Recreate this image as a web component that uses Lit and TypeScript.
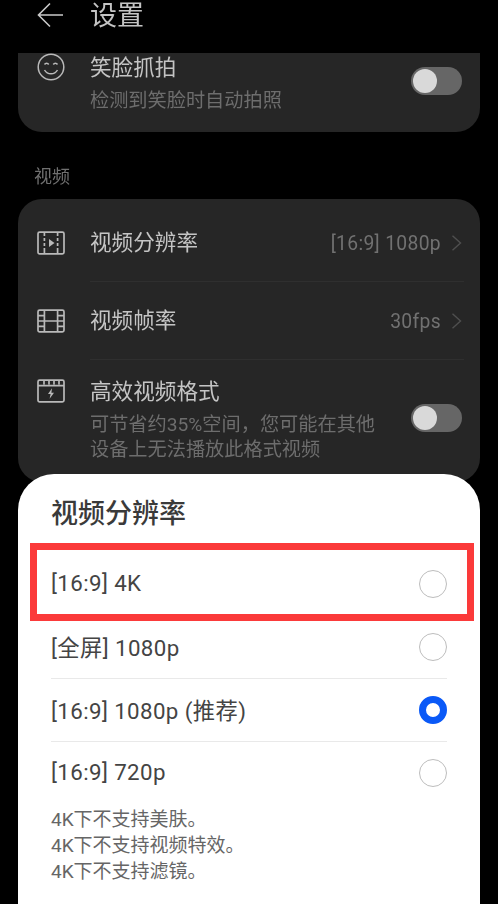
import { LitElement, html, css, svg } from "lit";
import { customElement } from "lit/decorators.js";

const icon = (body: unknown) => html`<svg class="icon" viewBox="0 0 28 28" fill="none" stroke="currentColor" stroke-width="1.7">${body}</svg>`;

const chevron = html`<svg class="chev" viewBox="0 0 11 16" fill="none" stroke="#4f4f4f" stroke-width="1.4"><path d="M1.5 0.8 L9.5 8 L1.5 15.2"/></svg>`;

const frame = svg`<rect x="1" y="3.2" width="26" height="21.6" rx="1.6"/>`;

const playIcon = icon(svg`${frame}
  <path d="M7.4 3.5v3.5M7.4 9v3M7.4 14v3M7.4 19v5.5M20.6 3.5v3.5M20.6 9v3M20.6 14v3M20.6 19v5.5"/>
  <path d="M12 10 L17.5 14 L12 18Z" fill="currentColor" stroke="none"/>`);

const filmIcon = icon(svg`${frame}
  <path d="M7.4 3.5v21M20.6 3.5v21M7.4 14h13.2M1 8.6h6.4M1 14h6.4M1 19.4h6.4M20.6 8.6h6.4M20.6 14h6.4M20.6 19.4h6.4"/>`);

const boltIcon = icon(svg`${frame}
  <path d="M1 8.6h26M7 4v3.6M12 4v3.6M17 4v3.6M22 4v3.6"/>
  <path d="M15 11.2 L11 17 H13.6 L12.6 21.8 L17 15.8 H14.4Z" fill="currentColor" stroke="none"/>`);

const smile = html`<svg class="icon smile" viewBox="0 0 28 28" fill="none" stroke="currentColor" stroke-width="1.5">
  <circle cx="14" cy="14" r="12.8"/>
  <path d="M7.5 11.5c1-1.6 3.2-1.6 4.2 0M16.3 11.5c1-1.6 3.2-1.6 4.2 0"/>
  <path d="M7.5 17c1.5 2.6 3.8 3.8 6.5 3.8s5-1.2 6.5-3.8"/>
</svg>`;

const toggle = html`<div class="toggle"><div class="knob"></div></div>`;

const options = [
  { label: "[16:9] 4K", on: false, line: false },
  { label: "[全屏] 1080p", on: false, line: true },
  { label: "[16:9] 1080p (推荐)", on: true, line: true },
  { label: "[16:9] 720p", on: false, line: false },
];

@customElement("app-root")
export class AppRoot extends LitElement {
  static styles = css`
    :host {
      display: block;
      width: 498px;
      height: 904px;
      background: #000;
      position: relative;
      overflow: hidden;
      font-family: "Roboto", "Noto Sans CJK SC", sans-serif;
      color: #c9c9c9;
    }
    .screen { height: 904px; position: relative; filter: blur(0.45px); }
    .header {
      height: 53px;
      display: flex;
      align-items: center;
      padding: 0 0 22px 37px;
      gap: 26px;
      box-sizing: border-box;
    }
    .back { width: 27px; height: 26px; color: #c9c9c9; flex: none; margin-top: -2px; }
    .header-title { font-size: 27px; line-height: 30px; color: #c4c4c4; }
    .card {
      background: #262626;
      margin: 0 18px;
      position: relative;
    }
    .card-top {
      height: 79px;
      border-radius: 0 0 24px 24px;
      padding: 0 18px 0 19px;
      display: flex;
      align-items: flex-start;
      box-sizing: border-box;
    }
    .icon { width: 28px; height: 28px; color: #b9b9b9; flex: none; }
    .section {
      height: 67px;
      box-sizing: border-box;
      padding: 34px 0 0 34px;
      font-size: 18px;
      line-height: 22px;
      color: #707070;
    }
    .card-main {
      height: 283px;
      border-radius: 24px;
      padding: 0 18px 0 19px;
    }
    .row {
      display: flex;
      align-items: center;
    }
    .row.nav-1 { height: 82px; padding-top: 6px; box-sizing: border-box; }
    .row.nav-2 { height: 77px; padding-top: 1px; box-sizing: border-box; }
    .sep {
      height: 1px;
      background: #2f2f2f;
      margin-left: 53px;
      margin-right: -2px;
    }
    .text { margin-left: 25px; flex: 1; min-width: 0; }
    .name { font-size: 21.6px; line-height: 26px; color: #c4c4c4; white-space: nowrap; }
    .sub { font-size: 19.2px; line-height: 25px; color: #6d6d6d; white-space: nowrap; }
    .value { font-size: 19.3px; letter-spacing: 0.33px; color: #717171; margin-right: 10px; white-space: nowrap; }
    .chev { width: 11px; height: 16px; flex: none; }
    .row-top { display: flex; align-items: flex-start; padding-top: 19px; }
    .row-top .icon { margin-top: -2px; }
    .toggle {
      width: 51px;
      height: 28px;
      border-radius: 14px;
      background: #666;
      flex: none;
      position: relative;
    }
    .knob {
      position: absolute;
      left: 2px;
      top: 2px;
      width: 24px;
      height: 24px;
      border-radius: 50%;
      background: #d9d9d9;
    }
    .card-top .toggle { margin-top: 14px; margin-left: auto; }
    .card-top .text { flex: none; margin-top: 2px; }
    .card-top .sub { margin-top: 7px; }
    .row-top .toggle { margin-top: 25px; }
    .row-top .name { margin-bottom: 7px; }
    .sheet {
      position: absolute;
      left: 18px;
      right: 18px;
      top: 474px;
      bottom: 0;
      background: #fff;
      border-radius: 36px 36px 0 0;
      padding: 0 33px 0 33px;
      color: #333;
    }
    .sheet-title {
      font-size: 27px;
      line-height: 30px;
      font-weight: 500;
      color: #3a3a3a;
      padding-top: 25px;
      height: 78px;
      box-sizing: border-box;
    }
    .option {
      height: 63px;
      display: flex;
      align-items: center;
      justify-content: space-between;
      box-sizing: border-box;
      font-size: 22.3px;
      letter-spacing: 0.4px;
      color: #444;
    }
    .option span { margin-top: -2px; }
    .option.line { box-shadow: 0 1px 0 #e9e9e9; }
    .radio {
      width: 28px;
      height: 28px;
      border-radius: 50%;
      border: 1.5px solid #bdbdbd;
      box-sizing: border-box;
      flex: none;
    }
    .radio.on { border: 7px solid #0a59f7; }
    .notes {
      margin-top: 3px;
      font-size: 19px;
      line-height: 26px;
      color: #666;
    }
    .mark {
      position: absolute;
      left: 30px;
      top: 543px;
      width: 444px;
      height: 78px;
      box-sizing: border-box;
      border: 7px solid #fb3a3a;
    }
  `;

  render() {
    return html`
      <div class="screen">
        <div class="header">
          <svg class="back" viewBox="0 0 27 26" fill="none" stroke="currentColor" stroke-width="1.6">
            <path d="M13 1.5 L1.5 13 L13 24.5 M1.5 13 H26"/>
          </svg>
          <div class="header-title">设置</div>
        </div>

        <div class="card card-top">
          ${smile}
          <div class="text">
            <div class="name">笑脸抓拍</div>
            <div class="sub">检测到笑脸时自动拍照</div>
          </div>
          ${toggle}
        </div>

        <div class="section">视频</div>

        <div class="card card-main">
          <div class="row nav-1">
            ${playIcon}
            <div class="text"><div class="name">视频分辨率</div></div>
            <div class="value">[16:9] 1080p</div>
            ${chevron}
          </div>
          <div class="sep"></div>
          <div class="row nav-2">
            ${filmIcon}
            <div class="text"><div class="name">视频帧率</div></div>
            <div class="value">30fps</div>
            ${chevron}
          </div>
          <div class="sep"></div>
          <div class="row-top">
            ${boltIcon}
            <div class="text">
              <div class="name">高效视频格式</div>
              <div class="sub">可节省约35%空间，您可能在其他</div>
              <div class="sub">设备上无法播放此格式视频</div>
            </div>
            ${toggle}
          </div>
        </div>

        <div class="sheet">
          <div class="sheet-title">视频分辨率</div>
          ${options.map(
            (o) => html`<div class="option ${o.line ? "line" : ""}">
              <span>${o.label}</span>
              <div class="radio ${o.on ? "on" : ""}"></div>
            </div>`
          )}
          <div class="notes">
            <div>4K下不支持美肤。</div>
            <div>4K下不支持视频特效。</div>
            <div>4K下不支持滤镜。</div>
          </div>
        </div>
      </div>
      <div class="mark"></div>
    `;
  }
}
